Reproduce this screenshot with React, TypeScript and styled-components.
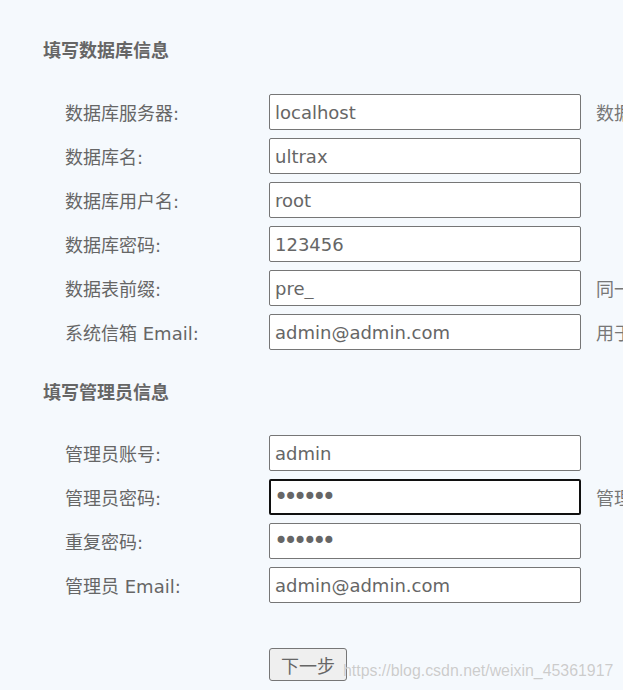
import React from "react";
import styled, { createGlobalStyle } from "styled-components";

const Global = createGlobalStyle`
  html, body {
    margin: 0;
    padding: 0;
    background: #f5f9fd;
    overflow: hidden;
  }
  body {
    font-family: "DejaVu Sans", Verdana, "Noto Sans CJK SC", sans-serif;
    color: #666;
  }
`;

const Page = styled.div`
  position: relative;
  width: 623px;
  height: 690px;
  overflow: hidden;
  box-sizing: border-box;
  padding: 39px 0 0 43px;
`;

const Section = styled.section<{ $gap: number }>`
  display: flex;
  flex-direction: column;
  margin-bottom: ${(p) => p.$gap}px;
`;

const Heading = styled.h2<{ $after: number }>`
  margin: 0 0 ${(p) => p.$after}px 0;
  font-size: 18px;
  line-height: 24px;
  font-weight: bold;
  color: #666;
  font-family: "DejaVu Sans", "Noto Sans CJK SC", sans-serif;
`;

const Rows = styled.div`
  display: grid;
  grid-template-columns: 189px 312px max-content;
  column-gap: 15px;
  row-gap: 8px;
  padding-left: 22px;
`;

const Label = styled.label`
  display: flex;
  align-items: center;
  height: 36px;
  font-size: 18px;
  color: #666;
  white-space: nowrap;
  font-family: "DejaVu Sans", "Noto Sans CJK SC", sans-serif;
`;

const Input = styled.input<{ $focused?: boolean }>`
  box-sizing: border-box;
  width: 312px;
  height: 36px;
  margin: 0;
  padding: 0 ${(p) => (p.$focused ? 4 : 5)}px;
  border: ${(p) => (p.$focused ? "2px solid #101010" : "1px solid #767676")};
  border-radius: 2px;
  background: #fff;
  font-family: "DejaVu Sans", Verdana, sans-serif;
  font-size: 18px;
  color: #666;
  outline: none;

  &[type="password"] {
    font-size: 24px;
    letter-spacing: -4.6px;
    padding-left: ${(p) => (p.$focused ? 3 : 4)}px;
  }
`;

const Hint = styled.span`
  display: flex;
  align-items: center;
  height: 36px;
  font-size: 18px;
  color: #777;
  white-space: nowrap;
  font-family: "Noto Sans CJK SC", sans-serif;
`;

const Footer = styled.div`
  padding-left: 226px;
`;

const Button = styled.button`
  box-sizing: border-box;
  width: 78px;
  height: 33px;
  border: 1px solid #767676;
  border-radius: 3px;
  background: #efefef;
  color: #666;
  font-size: 18px;
  font-family: "Noto Sans CJK SC", sans-serif;
  padding: 0;
`;

const Watermark = styled.div`
  position: absolute;
  left: 343px;
  top: 660px;
  font-family: "Liberation Sans", Arial, sans-serif;
  font-size: 15.9px;
  line-height: 22px;
  color: rgba(195, 195, 195, 0.85);
  white-space: nowrap;
  text-shadow: 0 0 1px rgba(255, 255, 255, 0.8);
`;

type Field = {
  label: string;
  value: string;
  type?: string;
  hint?: string;
  focused?: boolean;
};

const dbFields: Field[] = [
  { label: "数据库服务器:", value: "localhost", hint: "数据库服务器地址, 一般为 localhost" },
  { label: "数据库名:", value: "ultrax" },
  { label: "数据库用户名:", value: "root" },
  { label: "数据库密码:", value: "123456" },
  { label: "数据表前缀:", value: "pre_", hint: "同一数据库运行多个论坛时，请修改前缀" },
  { label: "系统信箱 Email:", value: "admin@admin.com", hint: "用于发送程序错误报告" },
];

const adminFields: Field[] = [
  { label: "管理员账号:", value: "admin" },
  { label: "管理员密码:", value: "123456", type: "password", focused: true, hint: "管理员密码不能为空" },
  { label: "重复密码:", value: "123456", type: "password" },
  { label: "管理员 Email:", value: "admin@admin.com" },
];

function FieldRows({ fields }: { fields: Field[] }) {
  return (
    <Rows>
      {fields.map((f) => (
        <React.Fragment key={f.label}>
          <Label>{f.label}</Label>
          <Input
            type={f.type ?? "text"}
            defaultValue={f.value}
            $focused={f.focused}
            readOnly
          />
          <Hint>{f.hint ?? ""}</Hint>
        </React.Fragment>
      ))}
    </Rows>
  );
}

export default function App() {
  return (
    <Page>
      <Global />
      <Section $gap={31}>
        <Heading $after={31}>填写数据库信息</Heading>
        <FieldRows fields={dbFields} />
      </Section>
      <Section $gap={45}>
        <Heading $after={30}>填写管理员信息</Heading>
        <FieldRows fields={adminFields} />
      </Section>
      <Footer>
        <Button>下一步</Button>
      </Footer>
      <Watermark>https://blog.csdn.net/weixin_45361917</Watermark>
    </Page>
  );
}
